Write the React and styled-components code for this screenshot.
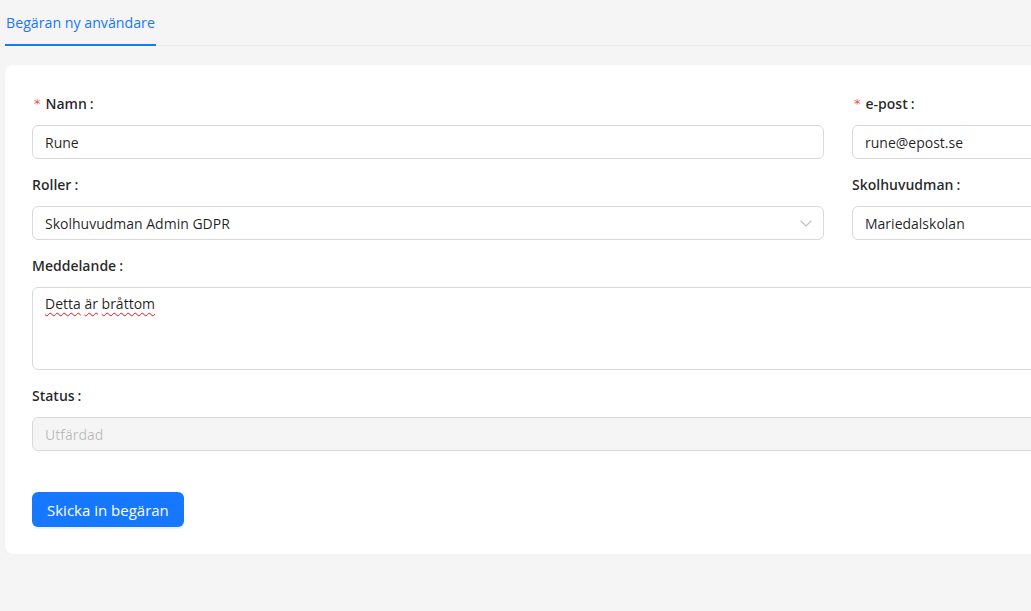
import React from "react";
import styled, { createGlobalStyle } from "styled-components";

const GlobalStyle = createGlobalStyle`
  html, body {
    margin: 0;
    padding: 0;
    background: #f5f5f5;
    overflow: hidden;
    font-family: "Segoe UI", "Open Sans", "Noto Sans", sans-serif;
    font-size: 14px;
    color: rgba(0, 0, 0, 0.88);
  }
  * { box-sizing: border-box; }
`;

const Page = styled.div`
  width: 1300px;
  padding: 0 0 0 5px;
`;

const TabBar = styled.div`
  display: flex;
  border-bottom: 1px solid #ebebeb;
  margin-bottom: 19px;
`;

const Tab = styled.div`
  padding: 12px 1px 10px;
  line-height: 22px;
  font-size: 14.2px;
  color: ${(props) => (props.active ? "#1677ff" : "rgba(0,0,0,0.88)")};
  border-bottom: 2px solid
    ${(props) => (props.active ? "#1677ff" : "transparent")};
  margin-bottom: -1px;
`;

const Card = styled.div`
  width: 1256px;
  background: #fff;
  border-radius: 8px;
  padding: 28px 27px 27px;
  box-shadow: 0 1px 2px rgba(0, 0, 0, 0.03), 0 1px 6px -1px rgba(0, 0, 0, 0.02);
`;

const FormGrid = styled.div`
  display: grid;
  grid-template-columns: 792px 382px;
  column-gap: 28px;
`;

const Item = styled.div`
  grid-column: ${(props) => (props.full ? "1 / -1" : "auto")};
  margin-bottom: 15px;
`;

const Label = styled.div`
  display: flex;
  align-items: center;
  height: 32px;
  padding-bottom: 10px;
  line-height: 22px;
  font-weight: 600;
  color: rgba(0, 0, 0, 0.85);
  &::after {
    content: ":";
    margin-left: 3px;
  }
`;

const Required = styled.span`
  color: #ff4d4f;
  font-family: SimSun, "DejaVu Sans", sans-serif;
  font-size: 13px;
  font-weight: 400;
  margin: 0 5px 0 2px;
`;

const Input = styled.input`
  display: block;
  width: 100%;
  height: 34px;
  padding: 0 12px;
  border: 1px solid #d9d9d9;
  border-radius: 6px;
  font: inherit;
  font-size: 14px;
  color: ${(props) => (props.disabled ? "rgba(0,0,0,0.25)" : "rgba(0,0,0,0.88)")};
  background: ${(props) => (props.disabled ? "#f5f5f5" : "#fff")};
  outline: none;
`;

const SelectBox = styled.div`
  display: flex;
  align-items: center;
  justify-content: space-between;
  height: 34px;
  padding: 0 11px 0 12px;
  border: 1px solid #d9d9d9;
  border-radius: 6px;
  background: #fff;
  color: rgba(0, 0, 0, 0.88);
`;

const Arrow = styled.svg`
  width: 12px;
  height: 12px;
  color: rgba(0, 0, 0, 0.25);
`;

const TextArea = styled.div`
  height: 83px;
  padding: 5px 12px;
  line-height: 22px;
  border: 1px solid #d9d9d9;
  border-radius: 6px;
  background: #fff;
`;

const Misspelled = styled.span`
  text-decoration: underline wavy #e81123;
  text-decoration-thickness: 1px;
  text-underline-offset: 3px;
`;

const SubmitRow = styled.div`
  grid-column: 1 / -1;
  padding-top: 26px;
`;

const Button = styled.button`
  height: 35px;
  padding: 0 15px;
  border: none;
  border-radius: 6px;
  background: #1677ff;
  color: #fff;
  font: inherit;
  font-size: 15px;
  box-shadow: 0 2px 0 rgba(5, 145, 255, 0.1);
  cursor: pointer;
`;

const Field = ({ label, required, full, children }) => (
  <Item full={full}>
    <Label>
      {required && <Required>*</Required>}
      {label}
    </Label>
    {children}
  </Item>
);

export default function App() {
  return (
    <>
      <GlobalStyle />
      <Page>
        <TabBar>
          <Tab active>Begäran ny användare</Tab>
        </TabBar>
        <Card>
          <FormGrid>
            <Field label="Namn" required>
              <Input defaultValue="Rune" readOnly />
            </Field>
            <Field label="e-post" required>
              <Input defaultValue="rune@epost.se" readOnly />
            </Field>
            <Field label="Roller">
              <SelectBox>
                <span>Skolhuvudman Admin GDPR</span>
                <Arrow viewBox="0 0 12 12" fill="none">
                  <path
                    d="M1 4l5 5 5-5"
                    stroke="currentColor"
                    strokeWidth="1.1"
                    strokeLinecap="round"
                    strokeLinejoin="round"
                  />
                </Arrow>
              </SelectBox>
            </Field>
            <Field label="Skolhuvudman">
              <Input defaultValue="Mariedalskolan" readOnly />
            </Field>
            <Field label="Meddelande" full>
              <TextArea>
                <Misspelled>Detta</Misspelled> <Misspelled>är</Misspelled>{" "}
                <Misspelled>bråttom</Misspelled>
              </TextArea>
            </Field>
            <Field label="Status" full>
              <Input defaultValue="Utfärdad" disabled />
            </Field>
            <SubmitRow>
              <Button>Skicka in begäran</Button>
            </SubmitRow>
          </FormGrid>
        </Card>
      </Page>
    </>
  );
}
